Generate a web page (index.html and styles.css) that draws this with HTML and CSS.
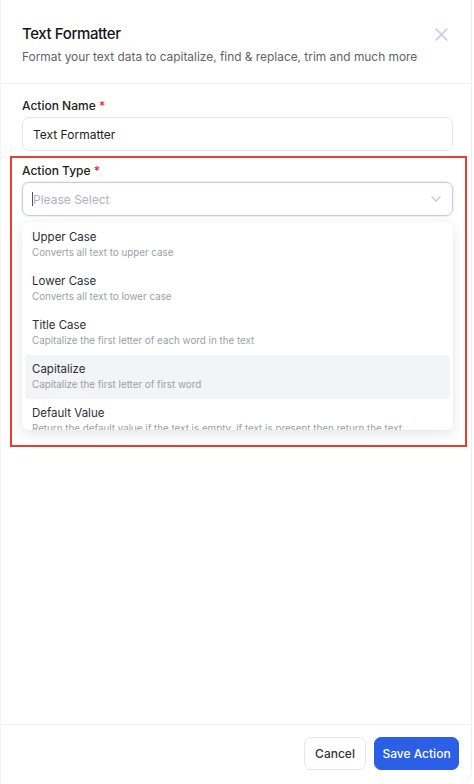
FILE: index.html
```html
<!DOCTYPE html>
<html>
<head>
<meta charset="utf-8">
<link rel="stylesheet" href="styles.css">
</head>
<body>
<div class="panel">
  <div class="header">
    <div class="header-text">
      <div class="title">Text Formatter</div>
      <div class="subtitle">Format your text data to capitalize, find &amp; replace, trim and much more</div>
    </div>
    <svg class="close" width="13" height="13" viewBox="0 0 13 13"><path d="M1 1L12 12M12 1L1 12" stroke="#c3c8e6" stroke-width="1.5" stroke-linecap="round"/></svg>
  </div>
  <div class="body">
    <div class="field">
      <div class="label">Action Name <span class="req">*</span></div>
      <div class="input">Text Formatter</div>
    </div>
    <div class="highlight">
      <div class="label">Action Type <span class="req">*</span></div>
      <div class="select">
        <span class="caret"></span><span class="placeholder">Please Select</span>
        <svg class="chev" width="10" height="6" viewBox="0 0 10 6"><path d="M1 1L5 5L9 1" fill="none" stroke="#c4c8d2" stroke-width="1.2" stroke-linecap="round" stroke-linejoin="round"/></svg>
      </div>
      <div class="menu">
        <div class="opt"><div class="opt-t">Upper Case</div><div class="opt-d">Converts all text to upper case</div></div>
        <div class="opt"><div class="opt-t">Lower Case</div><div class="opt-d">Converts all text to lower case</div></div>
        <div class="opt"><div class="opt-t">Title Case</div><div class="opt-d">Capitalize the first letter of each word in the text</div></div>
        <div class="opt active"><div class="opt-t">Capitalize</div><div class="opt-d">Capitalize the first letter of first word</div></div>
        <div class="opt"><div class="opt-t">Default Value</div><div class="opt-d">Return the default value if the text is empty, if text is present then return the text</div></div>
      </div>
    </div>
  </div>
  <div class="footer">
    <button class="btn cancel">Cancel</button>
    <button class="btn save">Save Action</button>
  </div>
</div>
</body>
</html>
```
FILE: styles.css
```css
* { box-sizing: border-box; }
html, body { margin: 0; padding: 0; background: #fff; }
body { font-family: Inter, "Noto Sans", sans-serif; color: #1f2328; }
.panel {
  width: 472px;
  height: 784px;
  display: flex;
  flex-direction: column;
  border-right: 1px solid #eceef2;
  border-left: 1px solid #f3f4f6;
  border-bottom-right-radius: 14px;
  background: #fff;
}
.header {
  display: flex;
  justify-content: space-between;
  align-items: flex-start;
  padding: 24px 23px 0 21px;
  height: 84px;
  border-bottom: 1px solid #eef0f3;
}
.header-text { flex: 1; white-space: nowrap; }
.title { font-size: 15px; font-weight: 500; color: #151515; line-height: 20px; letter-spacing: -0.4px; }
.subtitle { font-size: 11.9px; color: #5f6368; margin-top: 5px; line-height: 16px; }
.close { margin-top: 4px; flex: none; }
.body { flex: 1; padding: 13px 4px 0 9px; }
.field { padding: 0 14px 0 12px; }
.label { font-size: 12px; font-weight: 500; color: #222; line-height: 17px; }
.req { color: #d93025; }
.input {
  margin-top: 3px;
  height: 34px;
  border: 1px solid #e5e7eb;
  border-radius: 7px;
  padding: 0 10px;
  display: flex;
  align-items: center;
  font-size: 12px;
  color: #222;
}
.highlight {
  margin-top: 5px;
  border: 2px solid #e2412f;
  height: 291px;
  padding: 4px 12px 0 10px;
  overflow: hidden;
}
.select {
  margin-top: 3px;
  height: 34px;
  border: 1px solid #c5cbec;
  border-radius: 7px;
  box-shadow: 0 0 0 1px #eef0fb;
  padding: 0 11px 0 9px;
  display: flex;
  align-items: center;
  font-size: 12px;
}
.caret { width: 1px; height: 14px; background: #4b5563; }
.placeholder { color: #aeb3bd; flex: 1; }
.menu {
  margin-top: 6px;
  height: 208px;
  overflow: hidden;
  background: #fff;
  border-radius: 6px;
  box-shadow: 0 4px 14px rgba(0,0,0,0.10), 0 0 2px rgba(0,0,0,0.06);
  padding: 1px 3px 0 3px;
}
.opt { height: 44px; padding: 7px 7px 0 7px; border-radius: 4px; }
.opt.active { background: #f3f4f6; }
.opt-t { font-size: 11.5px; color: #2b2f36; line-height: 15px; }
.opt-d { font-size: 9.8px; color: #9aa0a8; line-height: 14px; margin-top: 1px; white-space: nowrap; }
.footer {
  height: 60px;
  border-top: 1px solid #eef0f3;
  display: flex;
  justify-content: flex-end;
  align-items: flex-start;
  gap: 8px;
  padding: 12px 12px 0 0;
}
.btn {
  height: 33px;
  border-radius: 7px;
  font-family: Inter, "Noto Sans", sans-serif;
  font-size: 12px;
  font-weight: 500;
  padding: 0;
  white-space: nowrap;
  cursor: pointer;
}
.cancel { background: #fff; border: 1px solid #e5e7eb; color: #333; width: 62px; }
.save { background: #2a5fe6; border: 1px solid #2a5fe6; color: #fff; width: 85px; }
```
